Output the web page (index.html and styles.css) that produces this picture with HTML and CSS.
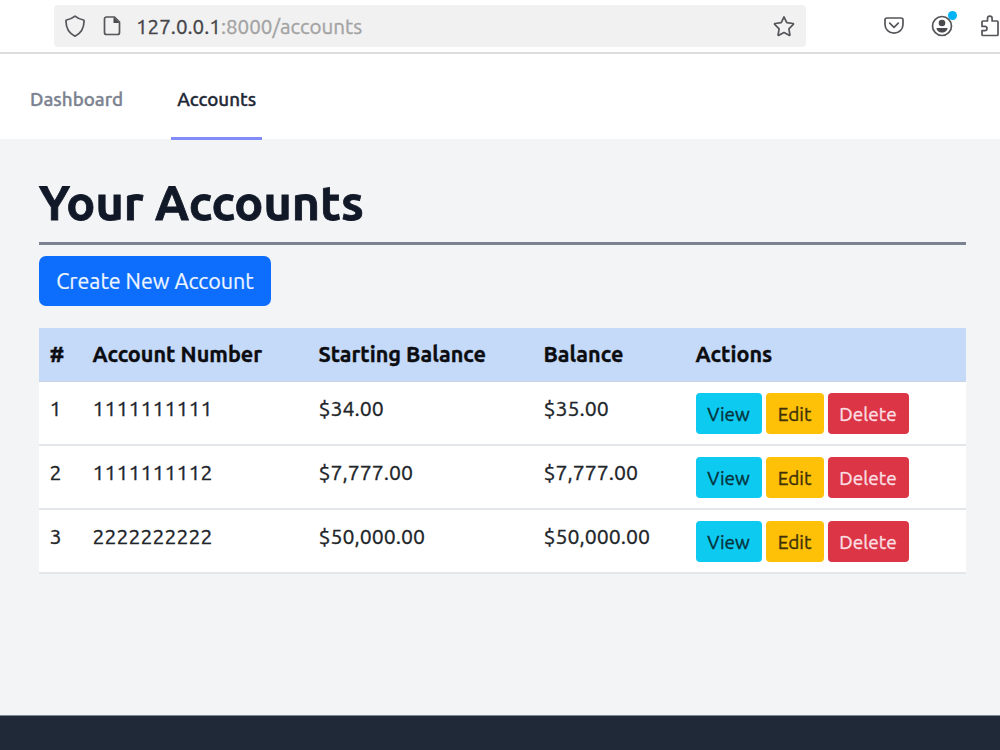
FILE: index.html
```html
<!DOCTYPE html>
<html lang="en">
<head>
    <meta charset="UTF-8">
    <meta name="viewport" content="width=device-width, initial-scale=1.0">
    <title>Accounts</title>
    <link rel="stylesheet" href="styles.css">
</head>
<body>
    <div class="toolbar">
        <div class="address-bar">
            <svg class="icon icon-shield" width="24" height="24" viewBox="0 0 24 24">
                <path d="M12 2.200c2.700 2.300 5.500 3.200 8.500 3.800.4.100.6.300.6.700C21 14 17.500 19.500 12 22.200 6.500 19.500 3 14 2.900 6.700c0-.4.200-.6.600-.7C6.500 5.400 9.300 4.500 12 2.200z"/>
            </svg>
            <svg class="icon icon-page" width="20" height="22" viewBox="0 0 20 22">
                <path d="M4.500 2h8l5 5v10.500a2 2 0 0 1-2 2h-11a2 2 0 0 1-2-2V4a2 2 0 0 1 2-2z"/>
                <path class="fill" d="M11.500 2v6h6z"/>
            </svg>
            <div class="url"><span class="host">127.0.0.1</span><span class="path">:8000/accounts</span></div>
            <svg class="icon icon-star" width="24" height="24" viewBox="0 0 24 24">
                <path d="M12 3l2.800 5.600 6.200.9c.5.100.6.500.3.900L16.900 14.800l1 6c.1.500-.3.700-.7.500L12 18.500l-5.200 2.800c-.4.200-.8 0-.7-.5l1-6-4.400-4.400c-.3-.4-.2-.8.300-.9l6.200-.9z"/>
            </svg>
        </div>
        <div class="toolbar-buttons">
            <svg class="icon" width="22" height="22" viewBox="0 0 22 22">
                <path d="M4 3h14a2 2 0 0 1 2 2v4.500a9 8.700 0 0 1-18 0V5a2 2 0 0 1 2-2z"/>
                <path d="M6.700 8.200L11 12.300l4.300-4.100"/>
            </svg>
            <div class="profile">
                <svg class="icon" width="22" height="22" viewBox="0 0 22 22">
                    <circle cx="11" cy="11" r="9.500"/>
                    <circle class="fill" cx="11" cy="8" r="3.300"/>
                    <path class="fill" d="M5.500 13h11c0 2.700-2.500 4.500-5.500 4.500S5.500 15.700 5.500 13z"/>
                </svg>
                <span class="badge"></span>
            </div>
            <svg class="icon icon-puzzle" width="24" height="24" viewBox="0 0 24 24">
                <path d="M3 8c0-.6.400-1 1-1h4.500V4.500a2.300 2.300 0 0 1 4.600 0V7h4.900c.6 0 1 .4 1 1v12.500c0 .6-.4 1-1 1H4c-.6 0-1-.4-1-1v-3.800h2.800a2.200 2.200 0 0 0 0-4.400H3z"/>
            </svg>
        </div>
    </div>

    <nav class="navbar">
        <a class="nav-link">Dashboard</a>
        <a class="nav-link active">Accounts</a>
    </nav>

    <main class="container">
        <h1>Your Accounts</h1>
        <a class="btn btn-primary">Create New Account</a>

        <table class="table">
            <colgroup>
                <col class="col-id">
                <col class="col-number">
                <col class="col-starting">
                <col class="col-balance">
                <col>
            </colgroup>
            <thead>
                <tr>
                    <th>#</th>
                    <th>Account Number</th>
                    <th>Starting Balance</th>
                    <th>Balance</th>
                    <th>Actions</th>
                </tr>
            </thead>
            <tbody>
                <tr>
                    <td>1</td>
                    <td>1111111111</td>
                    <td>$34.00</td>
                    <td>$35.00</td>
                    <td>
                        <div class="actions">
                            <a class="btn btn-sm btn-info">View</a>
                            <a class="btn btn-sm btn-warning">Edit</a>
                            <a class="btn btn-sm btn-danger">Delete</a>
                        </div>
                    </td>
                </tr>
                <tr>
                    <td>2</td>
                    <td>1111111112</td>
                    <td>$7,777.00</td>
                    <td>$7,777.00</td>
                    <td>
                        <div class="actions">
                            <a class="btn btn-sm btn-info">View</a>
                            <a class="btn btn-sm btn-warning">Edit</a>
                            <a class="btn btn-sm btn-danger">Delete</a>
                        </div>
                    </td>
                </tr>
                <tr>
                    <td>3</td>
                    <td>2222222222</td>
                    <td>$50,000.00</td>
                    <td>$50,000.00</td>
                    <td>
                        <div class="actions">
                            <a class="btn btn-sm btn-info">View</a>
                            <a class="btn btn-sm btn-warning">Edit</a>
                            <a class="btn btn-sm btn-danger">Delete</a>
                        </div>
                    </td>
                </tr>
            </tbody>
        </table>
    </main>

    <footer class="footer"></footer>
</body>
</html>
```
FILE: styles.css
```css
* {
    box-sizing: border-box;
}
body {
    font-family: Ubuntu, "Noto Sans", sans-serif;
    font-size: 21.3px;
    line-height: 32px;
    margin: 0;
    height: 750px;
    display: flex;
    flex-direction: column;
    overflow: hidden;
    color: #212529;
    background-color: #f3f4f6;
    -webkit-text-stroke: 0.35px;
}

/* Browser toolbar */
.toolbar {
    display: flex;
    align-items: flex-start;
    height: 54px;
    padding: 5px 0 0 54px;
    background-color: #fff;
    border-bottom: 2px solid #dcdcdc;
}
.address-bar {
    display: flex;
    flex: none;
    align-items: center;
    width: 752px;
    height: 42px;
    padding: 0 10px 0 9px;
    border-radius: 4px;
    background-color: #f1f1f1;
}
.icon {
    display: block;
    flex: none;
    fill: none;
    stroke: #55555a;
    stroke-width: 1.7;
    stroke-linecap: round;
    stroke-linejoin: round;
}
.icon .fill {
    fill: #4a4a4f;
    stroke: none;
}
.icon-page {
    margin-left: 15px;
}
.url {
    flex: 1;
    margin-left: 14px;
    padding-top: 1px;
    font-size: 20.6px;
}
.host {
    color: #45454a;
}
.path {
    color: #a3a3a3;
}
.toolbar-buttons {
    display: flex;
    flex: none;
    align-items: center;
    gap: 26px;
    height: 42px;
    margin-left: 77px;
}
.profile {
    position: relative;
}
.badge {
    position: absolute;
    top: -4px;
    right: -4px;
    width: 9px;
    height: 9px;
    border-radius: 50%;
    background-color: #00b3f4;
}

/* Navigation */
.navbar {
    display: flex;
    gap: 42px;
    height: 85px;
    padding-left: 24px;
    background-color: #fff;
}
.nav-link {
    height: 86px;
    padding: 0 6px;
    border-bottom: 3px solid transparent;
    color: #7b8290;
    font-size: 18.8px;
    font-weight: 500;
    line-height: 90px;
}
.nav-link.active {
    border-color: #818cf8;
    color: #1f2937;
}

/* Content */
.container {
    flex: 1;
    padding: 32px 34px 0 39px;
}
h1 {
    margin: 0 0 11px;
    height: 74px;
    border-bottom: 3px solid #7b8290;
    color: #111827;
    font-size: 48.4px;
    line-height: 62px;
    -webkit-text-stroke: 0.8px;
}
.btn {
    display: inline-block;
    text-align: center;
    white-space: nowrap;
}
.btn-primary {
    display: block;
    width: 232px;
    height: 50px;
    border-radius: 7px;
    background-color: #0d6efd;
    color: #eef5ff;
    font-size: 21.5px;
    line-height: 51px;
    -webkit-text-stroke: 0.2px;
}
.btn-sm {
    height: 41px;
    border-radius: 4px;
    font-size: 19px;
    line-height: 42px;
}
.btn-info {
    width: 66px;
    background-color: #0dcaf0;
    color: #06323c;
}
.btn-warning {
    width: 58px;
    background-color: #ffc107;
    color: #40300a;
}
.btn-danger {
    width: 81px;
    background-color: #dc3545;
    color: #fbdfe2;
}
.table {
    width: 927px;
    margin-top: 22px;
    border-collapse: separate;
    border-spacing: 0;
    table-layout: fixed;
}
.col-id {
    width: 43px;
}
.col-number {
    width: 226px;
}
.col-starting {
    width: 225px;
}
.col-balance {
    width: 152px;
}
th, td {
    height: 64px;
    padding: 11px 0 0 10.5px;
    border-bottom: 2px solid #e3e6ea;
    background-color: #fff;
    line-height: 31px;
    text-align: left;
    vertical-align: top;
}
th {
    height: 54px;
    border-bottom: 1px solid #c9d3e4;
    background-color: #c5d9f9;
    color: #0b0d10;
    font-size: 21.6px;
}
.actions {
    display: flex;
    gap: 4px;
}

.footer {
    height: 35px;
    border-top: 1px solid #7d8590;
    background-color: #1f2937;
}
```
